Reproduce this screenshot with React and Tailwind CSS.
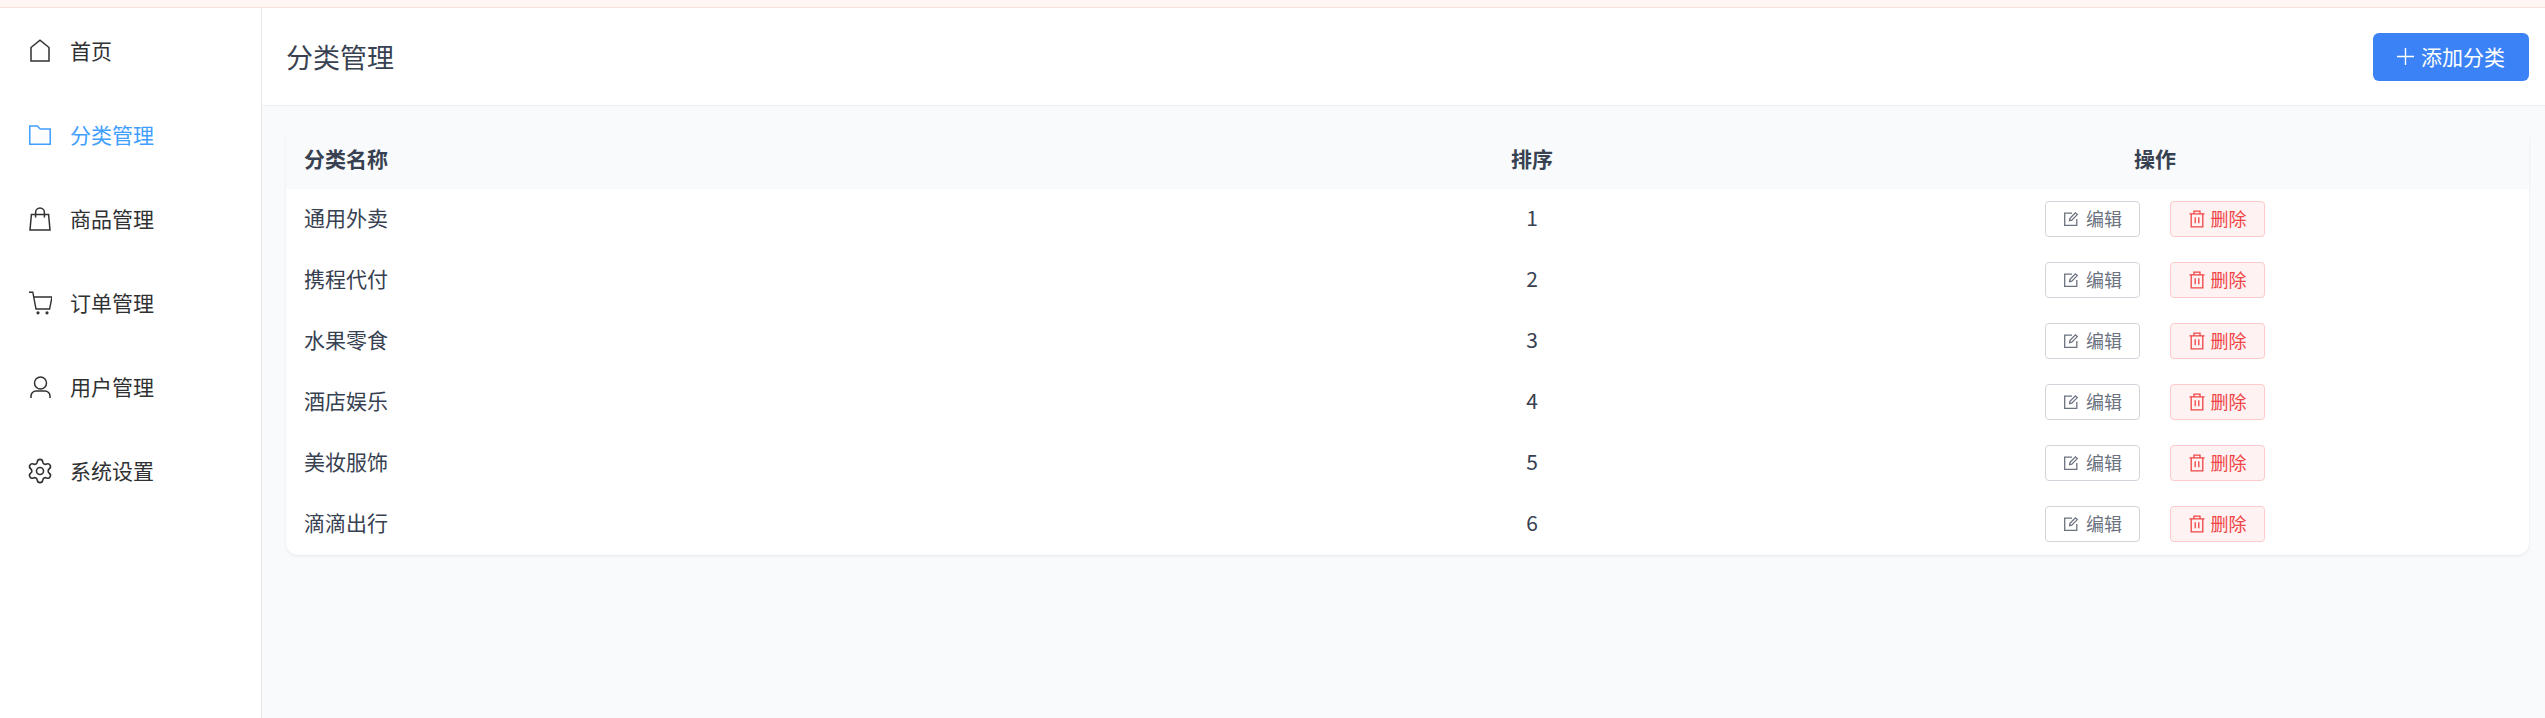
import React from "react";
import { Settings } from "lucide-react";

const FONT = "font-['Noto_Sans_CJK_SC','Noto_Sans',sans-serif]";

const HouseIcon = () => (
  <svg width="24" height="24" viewBox="0 0 24 24" fill="none" stroke="currentColor" strokeWidth="1.5">
    <path d="M3 8.5 12 1.2l9 7.3V22H3z" />
  </svg>
);

const FolderIcon = () => (
  <svg width="24" height="24" viewBox="0 0 24 24" fill="none" stroke="currentColor" strokeWidth="1.5">
    <path d="M1.8 3h7.4l3 3h10v15.2H1.8z" />
  </svg>
);

const BagIcon = () => (
  <svg width="24" height="24" viewBox="0 0 24 24" fill="none" stroke="currentColor" strokeWidth="1.5">
    <path d="M3.4 7.5h17.2L22 23H2z" />
    <path d="M7.6 10.5V5.5a4.4 4.4 0 0 1 8.8 0v5" />
  </svg>
);

const CartIcon = () => (
  <svg width="24" height="24" viewBox="0 0 24 24" fill="none" stroke="currentColor" strokeWidth="1.4">
    <path d="M1 1.2h3.8L8 18h13.6L24 6H5.8" />
    <circle cx="10" cy="21.8" r="0.9" fill="currentColor" />
    <circle cx="19" cy="21.8" r="0.9" fill="currentColor" />
  </svg>
);

const UserIcon = () => (
  <svg width="24" height="24" viewBox="0 0 24 24" fill="none" stroke="currentColor" strokeWidth="1.5">
    <circle cx="12.5" cy="8" r="6" />
    <path d="M3 23v-2a5 5 0 0 1 5-5h9a5 5 0 0 1 5 5v2" />
  </svg>
);

const GearIcon = () => <Settings size={28} strokeWidth={1.35} className="shrink-0" />;

const EditIcon = () => (
  <svg width="16" height="16" viewBox="0 0 16 16" fill="none" stroke="currentColor" strokeWidth="1.3">
    <path d="M9 2.2H1.7v12.1h12.1V8" />
    <path d="M6.6 9.6 7 7.4l5.4-5.6 1.9 1.8-5.5 5.6z" />
  </svg>
);

const TrashIcon = () => (
  <svg width="16" height="18" viewBox="0 0 16 18" fill="none" stroke="currentColor" strokeWidth="1.3">
    <path d="M.5 3.8h15M5 3.8V1.2h6v2.6M2.2 3.8v13h11.6v-13M6.2 7.2v6M9.8 7.2v6" />
  </svg>
);

const PlusIcon = () => (
  <svg width="17" height="17" viewBox="0 0 17 17" fill="none" stroke="currentColor" strokeWidth="1.4">
    <path d="M8.5 0v17M0 8.5h17" />
  </svg>
);

const menu = [
  { label: "首页", icon: <HouseIcon /> },
  { label: "分类管理", icon: <FolderIcon />, active: true },
  { label: "商品管理", icon: <BagIcon /> },
  { label: "订单管理", icon: <CartIcon /> },
  { label: "用户管理", icon: <UserIcon /> },
  { label: "系统设置", icon: <GearIcon /> },
];

const categories = [
  { name: "通用外卖", sort: 1 },
  { name: "携程代付", sort: 2 },
  { name: "水果零食", sort: 3 },
  { name: "酒店娱乐", sort: 4 },
  { name: "美妆服饰", sort: 5 },
  { name: "滴滴出行", sort: 6 },
];

const App = () => {
  return (
    <div className={`h-[718px] flex flex-col overflow-hidden bg-white ${FONT}`}>
      <div className="h-2 shrink-0 bg-[#fff5f3] border-b border-[#fbe1dc]"></div>

      <div className="flex flex-1 min-h-0">
        {/* Sidebar */}
        <aside className="w-[262px] shrink-0 bg-white border-r border-[#e5e7eb] pt-px">
          {menu.map((item) => (
            <div
              key={item.label}
              className={`h-[84px] flex items-center gap-[18px] pl-7 text-[21px] ${
                item.active ? "text-[#409eff]" : "text-[#303133]"
              }`}
            >
              <span className="w-6 h-6 flex items-center justify-center">{item.icon}</span>
              <span>{item.label}</span>
            </div>
          ))}
        </aside>

        {/* Main */}
        <main className="flex-1 min-w-0 flex flex-col bg-[#f9fafb]">
          <header className="h-[98px] shrink-0 flex items-center justify-between bg-white border-b border-[#eef0f3] pl-6 pr-4">
            <h1 className="text-[27px] font-normal text-[#374151] pt-[2px]">分类管理</h1>
            <button className="w-[156px] h-12 flex items-center justify-center gap-[7px] rounded-md bg-[#3b82f6] text-white text-[21px]">
              <PlusIcon />
              添加分类
            </button>
          </header>

          <div className="pt-[22px] pl-6 pr-4">
            <div className="rounded-xl overflow-hidden bg-white shadow-[0_1px_3px_rgba(0,0,0,0.08)]">
              <table className="w-full table-fixed text-[21px] text-[#374151]">
                <colgroup>
                  <col className="w-[997px]" />
                  <col className="w-[498px]" />
                  <col />
                </colgroup>
                <thead>
                  <tr className="h-[61px] bg-[#f9fafb]">
                    <th className="pl-[18px] text-left font-bold">分类名称</th>
                    <th className="text-center font-bold">排序</th>
                    <th className="text-center font-bold">操作</th>
                  </tr>
                </thead>
                <tbody>
                  {categories.map((cat) => (
                    <tr key={cat.name} className="h-[61px]">
                      <td className="pl-[18px] pb-[3px]">{cat.name}</td>
                      <td className="text-center pb-[3px]">{cat.sort}</td>
                      <td className="pb-[2px]">
                        <div className="flex items-center justify-center gap-[30px]">
                          <button className="w-[95px] h-9 flex items-center justify-center gap-[7px] rounded-[4px] border border-[#d1d5db] bg-white text-[#6b7280] text-[18px]">
                            <EditIcon />
                            编辑
                          </button>
                          <button className="w-[95px] h-9 flex items-center justify-center gap-[6px] rounded-[4px] border border-[#fecaca] bg-[#fef2f2] text-[#ef4444] text-[18px]">
                            <TrashIcon />
                            删除
                          </button>
                        </div>
                      </td>
                    </tr>
                  ))}
                </tbody>
              </table>
            </div>
          </div>
        </main>
      </div>
    </div>
  );
};

export default App;
